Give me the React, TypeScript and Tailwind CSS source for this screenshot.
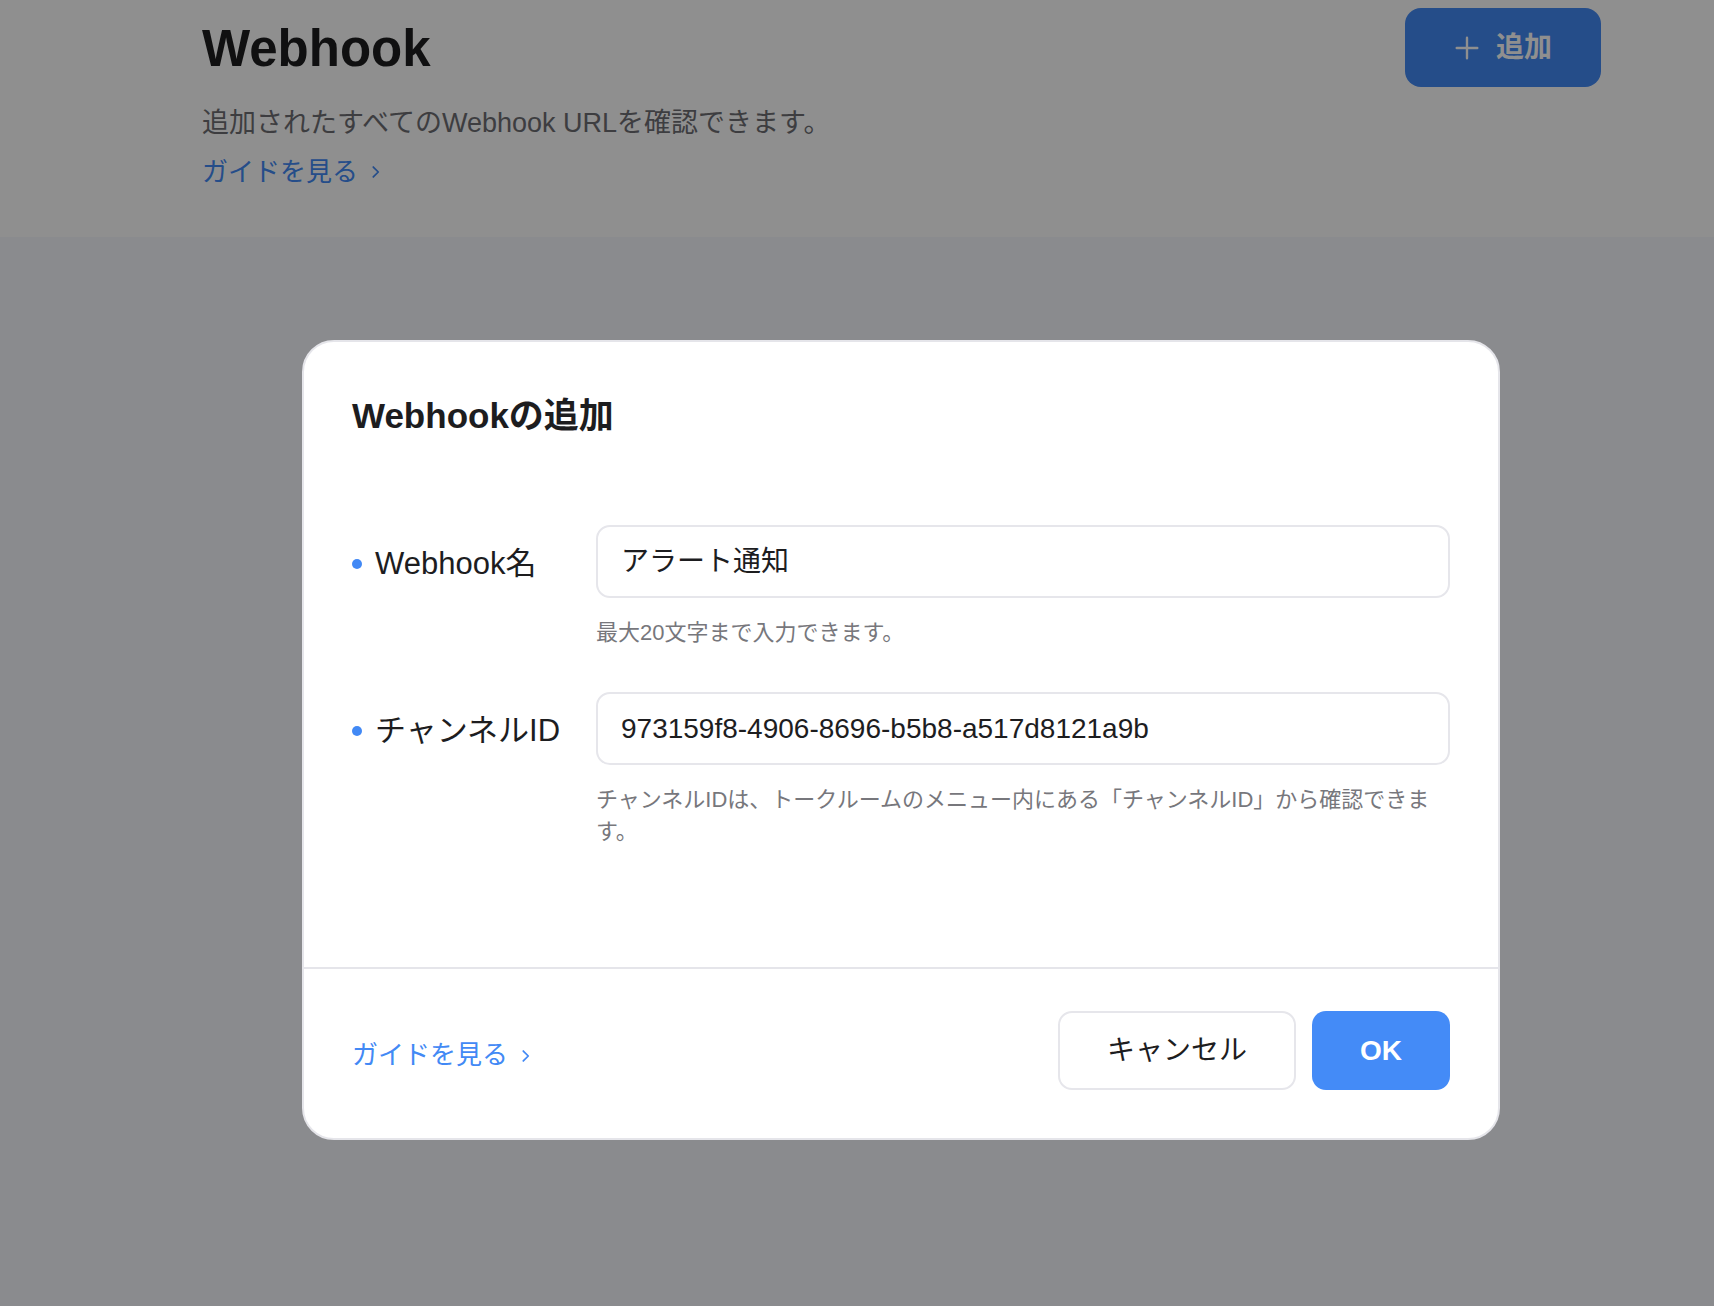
import React from "react";

const font = "font-['Liberation_Sans','Noto_Sans_CJK_JP',sans-serif]";

const Chevron = ({ className }: { className?: string }) => (
	<svg viewBox="0 0 10 16" className={className} fill="none" stroke="currentColor" strokeWidth={1.6} strokeLinecap="round" strokeLinejoin="round">
		<path d="M3 3.5 7.5 8 3 12.5" />
	</svg>
);

const Field = ({
	label,
	value,
	help,
}: {
	label: string;
	value: string;
	help: React.ReactNode;
}) => (
	<div className="flex">
		<div className="flex h-[73px] w-[244px] shrink-0 items-center gap-[13px] pt-[5px]">
			<span className="h-[10px] w-[10px] rounded-full bg-[#4289f5]" />
			<span className="text-[31px] text-[#1d1d1f]">{label}</span>
		</div>
		<div className="flex-1">
			<div className="flex h-[73px] items-center rounded-[14px] border-2 border-[#e6e6eb] px-[23px] text-[28px] text-[#1d1d1f]">
				{value}
			</div>
			<p className="mt-[19px] text-[22px] leading-[32px] text-[#77777c]">{help}</p>
		</div>
	</div>
);

export default function App() {
	return (
		<div className={`min-h-screen bg-[#f7f8fd] ${font}`}>
			<header className="flex h-[237px] justify-between bg-white pl-[202px] pr-[113px]">
				<div className="pt-[19px]">
					<h1 className="text-[51px] font-bold leading-[60px] text-[#1d1d1f]">Webhook</h1>
					<p className="mt-[26px] text-[27px] leading-[36px] text-[#6e6e73]">
						追加されたすべてのWebhook URLを確認できます。
					</p>
					<a className="mt-[13px] flex items-center gap-[12px] text-[26px] leading-[36px] text-[#4289f5]">
						ガイドを見る
						<Chevron className="h-[18px] w-[11px]" />
					</a>
				</div>
				<button className="mt-[8px] flex h-[79px] w-[196px] items-center justify-center gap-[16px] rounded-[16px] bg-[#4289f5] text-[28px] font-bold text-white">
					<svg viewBox="0 0 24 24" className="h-[26px] w-[26px]" fill="none" stroke="currentColor" strokeWidth={2.2} strokeLinecap="round">
						<path d="M12 2.5v19M2.5 12h19" />
					</svg>
					追加
				</button>
			</header>

			<div className="fixed inset-0 flex justify-center bg-black/[0.44] pl-[88px] pt-[340px]">
				<div className="h-fit w-[1198px] rounded-[32px] border-2 border-[#e5e5ea] bg-white">
					<div className="px-[48px] pb-[119px] pt-[50px]">
						<h2 className="text-[35px] font-bold leading-[48px] text-[#1d1d1f]">Webhookの追加</h2>
						<div className="mt-[85px]">
							<Field label="Webhook名" value="アラート通知" help="最大20文字まで入力できます。" />
						</div>
						<div className="mt-[43px]">
							<Field
								label="チャンネルID"
								value="973159f8-4906-8696-b5b8-a517d8121a9b"
								help={
									<>
										チャンネルIDは、トークルームのメニュー内にある「チャンネルID」から確認できま
										<br />
										す。
									</>
								}
							/>
						</div>
					</div>
					<div className="flex items-center justify-between border-t-2 border-[#e5e5ea] px-[48px] pb-[48px] pt-[42px]">
						<a className="flex items-center gap-[12px] pt-[10px] text-[26px] text-[#4289f5]">
							ガイドを見る
							<Chevron className="h-[18px] w-[11px]" />
						</a>
						<div className="flex gap-[16px]">
							<button className="h-[79px] w-[238px] rounded-[14px] border-2 border-[#e6e6eb] bg-white text-[28px] text-[#1d1d1f]">
								キャンセル
							</button>
							<button className="h-[79px] w-[138px] rounded-[14px] bg-[#448bf7] text-[28px] font-bold text-white">
								OK
							</button>
						</div>
					</div>
				</div>
			</div>
		</div>
	);
}
